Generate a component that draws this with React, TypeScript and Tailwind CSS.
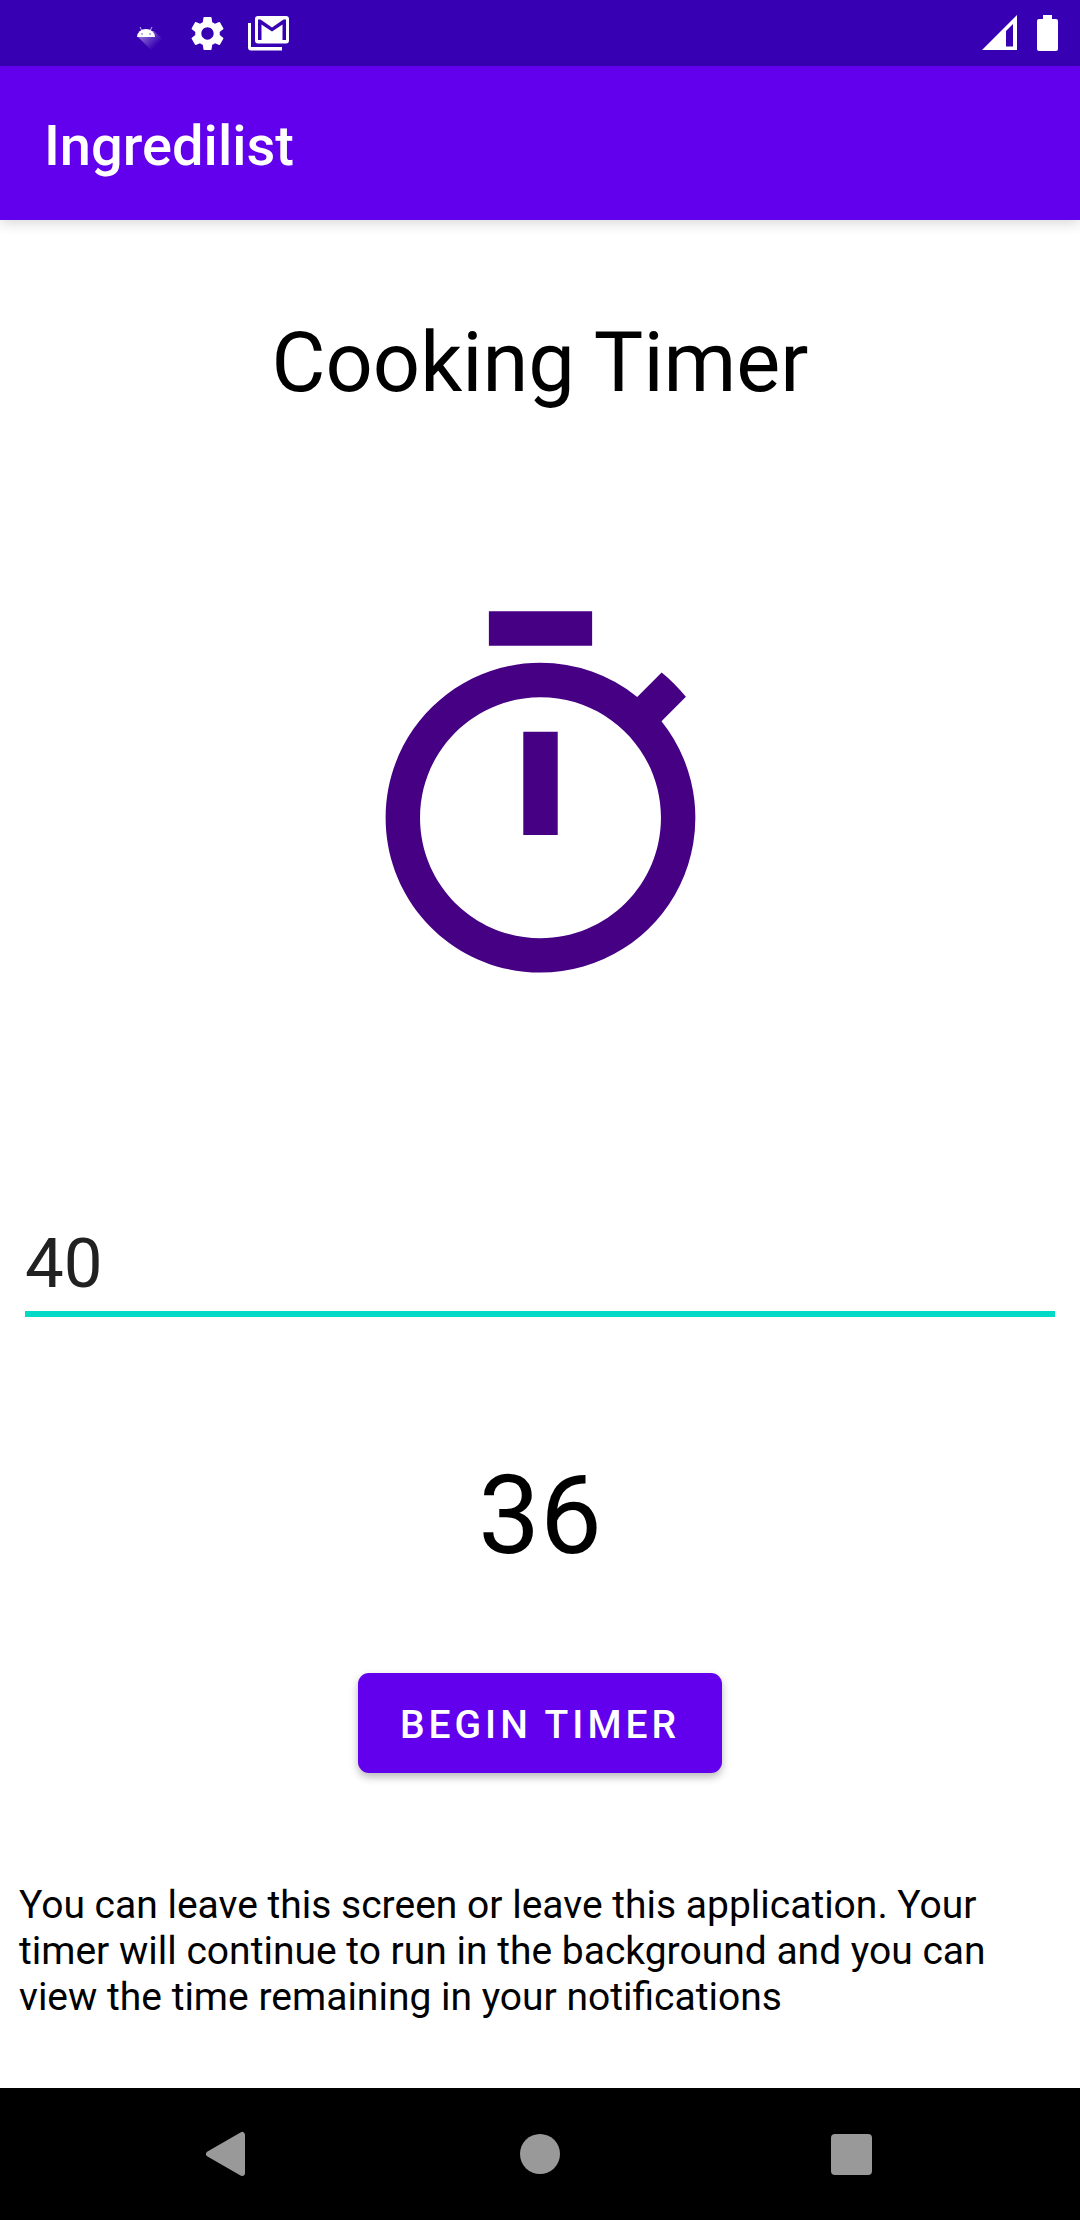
import { useState } from "react";

function AndroidIcon() {
  return (
    <svg className="h-[66px] w-[30px]" viewBox="0 0 30 66" aria-hidden="true">
      <defs>
        <linearGradient id="head-shadow" x1="8" y1="34" x2="20" y2="46" gradientUnits="userSpaceOnUse">
          <stop offset="0" stopColor="#fff" stopOpacity="0.4" />
          <stop offset="1" stopColor="#fff" stopOpacity="0" />
        </linearGradient>
      </defs>
      <path d="M2 37 L18 31 L30 42 L22 54 L17 52Z" fill="url(#head-shadow)" />
      <path d="M1 37a9 8 0 0 1 18 0z" fill="#fff" />
      <path d="M4 27l2 4M16 27l-2 4" stroke="#fff" strokeOpacity="0.7" strokeWidth="1" />
      <circle cx="6" cy="34" r="0.800" fill="#3700b3" fillOpacity="0.7" />
      <circle cx="14" cy="34" r="0.800" fill="#3700b3" fillOpacity="0.7" />
    </svg>
  );
}

function GearIcon() {
  return (
    <svg className="h-[41px] w-[41px]" viewBox="0 0 24 24" fill="#fff" aria-hidden="true">
      <path d="M19.14 12.94c.04-.3.06-.61.06-.94 0-.32-.02-.64-.07-.94l2.03-1.58a.49.49 0 0 0 .12-.61l-1.92-3.32a.488.488 0 0 0-.59-.22l-2.39.96c-.5-.38-1.03-.7-1.62-.94l-.36-2.54a.484.484 0 0 0-.48-.41h-3.84c-.24 0-.43.17-.47.41l-.36 2.54c-.59.24-1.13.57-1.62.94l-2.39-.96c-.22-.08-.47 0-.59.22L2.74 8.87c-.12.21-.08.47.12.61l2.03 1.58c-.05.3-.09.63-.09.94s.02.64.07.94l-2.03 1.58a.49.49 0 0 0-.12.61l1.92 3.32c.12.22.37.29.59.22l2.39-.96c.5.38 1.03.7 1.62.94l.36 2.54c.05.24.24.41.48.41h3.84c.24 0 .44-.17.47-.41l.36-2.54c.59-.24 1.13-.56 1.62-.94l2.39.96c.22.08.47 0 .59-.22l1.92-3.32c.12-.22.07-.47-.12-.61l-2.01-1.58zM12 15.6c-1.98 0-3.6-1.62-3.6-3.6s1.62-3.6 3.6-3.6 3.6 1.62 3.6 3.6-1.62 3.6-3.6 3.6z" />
    </svg>
  );
}

function MailIcon() {
  return (
    <svg className="h-[35px] w-[41px]" viewBox="0 0 41 35" aria-hidden="true">
      <path d="M0 7H3V31H34V34.500H3Q0 34.500 0 31.500Z" fill="#fff" />
      <path
        fillRule="evenodd"
        fill="#fff"
        d="M10 0H38Q41 0 41 3V24.500Q41 27.500 38 27.500H10Q7 27.500 7 24.500V3Q7 0 10 0ZM10 3.500V24H13.500V8.500L24 15.500L34.500 8.500V24H38V3.500H35.500L24 11.500L12.500 3.500Z"
      />
    </svg>
  );
}

function SignalIcon() {
  return (
    <svg className="h-[36px] w-[35px]" viewBox="0 0 35 36" aria-hidden="true">
      <path fillRule="evenodd" fill="#fff" d="M0 35L35 0V35ZM24 16V31.500H31V9Z" />
    </svg>
  );
}

function BatteryIcon() {
  return (
    <svg className="h-[36px] w-[21px]" viewBox="0 0 21 36" aria-hidden="true">
      <path fill="#fff" d="M6 0H15V4H19Q21 4 21 6V34Q21 36 19 36H2Q0 36 0 34V6Q0 4 2 4H6Z" />
    </svg>
  );
}

function StopwatchIcon() {
  return (
    <svg className="mt-[182px] h-[413px] w-[413px]" viewBox="0 0 24 24" fill="#460084" role="img" aria-label="Stopwatch">
      <path d="M15 1H9v2h6V1zm-4 13h2V8h-2v6zm8.030-6.610l1.420-1.420c-.43-.51-.9-.99-1.410-1.410l-1.420 1.420A8.962 8.962 0 0 0 12 4c-4.970 0-9 4.030-9 9s4.020 9 9 9a8.994 8.994 0 0 0 7.030-14.610zM12 20c-3.870 0-7-3.130-7-7s3.130-7 7-7 7 3.130 7 7-3.130 7-7 7z" />
    </svg>
  );
}

export default function App() {
  const [seconds, setSeconds] = useState("40");

  return (
    <div className="flex min-h-screen flex-col bg-white font-[Roboto,sans-serif] text-black">
      <div className="flex h-[66px] items-center justify-between bg-[#3700b3] pr-[22px] pl-[136px]">
        <div className="flex items-center">
          <AndroidIcon />
          <div className="ml-[21px] flex items-center gap-5">
            <GearIcon />
            <MailIcon />
          </div>
        </div>
        <div className="flex items-center gap-5">
          <SignalIcon />
          <BatteryIcon />
        </div>
      </div>

      <header className="z-10 flex h-[154px] items-center bg-[#6200ee] px-11 pt-1.5 shadow-[0_4px_12px_rgba(0,0,0,0.14)]">
        <p className="text-[56px] leading-none font-medium text-white">Ingredilist</p>
      </header>

      <main className="flex flex-1 flex-col items-center">
        <h1 className="mt-[94px] text-[83px] leading-[98px]">Cooking Timer</h1>
        <StopwatchIcon />
        <div className="mt-[216px] w-full px-[25px]">
          <input
            type="text"
            inputMode="numeric"
            aria-label="Seconds"
            value={seconds}
            onChange={(e) => setSeconds(e.target.value)}
            className="block h-[94px] w-full border-b-6 border-[#03dac5] pb-2 text-[69px] leading-[80px] text-[#212121] outline-none"
          />
        </div>
        <output className="mt-[134px] text-[110px] leading-[130px]">36</output>
        <button
          type="button"
          className="mt-[92px] h-[100px] rounded-[11px] bg-[#6200ee] px-[42px] pt-1 text-[39px] font-medium tracking-[4px] text-white shadow-[0_4px_8px_rgba(0,0,0,0.28)]"
        >
          BEGIN TIMER
        </button>
        <p className="mt-[109px] w-full px-[19px] text-[39px] leading-[46px]">
          You can leave this screen or leave this application. Your timer will continue to run in the background and
          you can view the time remaining in your notifications
        </p>
      </main>

      <nav className="grid h-[132px] grid-cols-3 bg-black px-[73px]">
        <button type="button" aria-label="Back" className="flex items-center justify-center">
          <svg className="h-[46px] w-[46px]" viewBox="0 0 46 46" aria-hidden="true">
            <path d="M3 23L36 4V42Z" fill="#999" stroke="#999" strokeWidth="6" strokeLinejoin="round" />
          </svg>
        </button>
        <button type="button" aria-label="Home" className="flex items-center justify-center">
          <span className="h-10 w-10 rounded-full bg-[#999]" />
        </button>
        <button type="button" aria-label="Recent apps" className="flex items-center justify-center">
          <span className="h-[41px] w-[41px] rounded-[4px] bg-[#999]" />
        </button>
      </nav>
    </div>
  );
}
